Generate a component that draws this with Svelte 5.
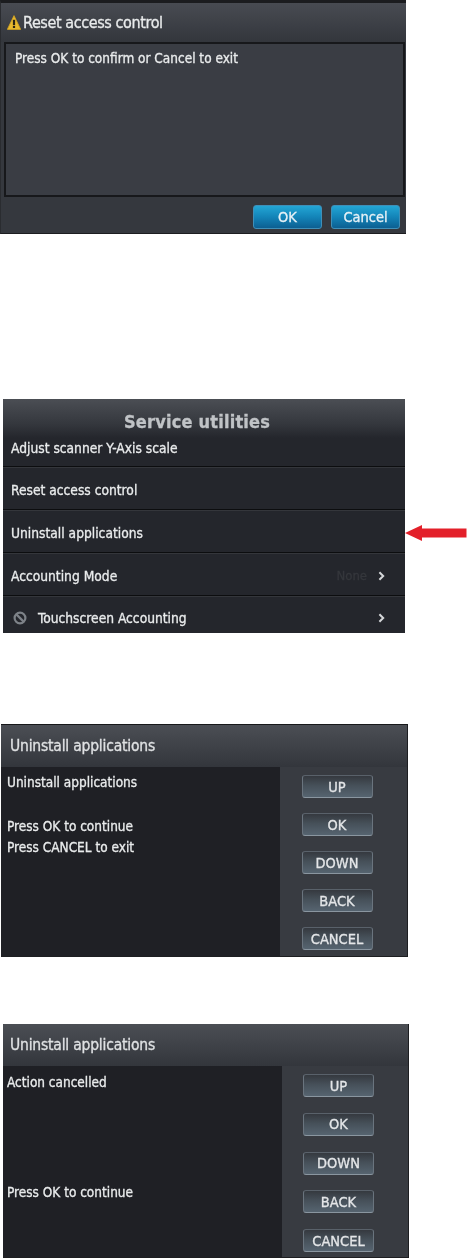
<script>
  const rows = [
    { label: 'Adjust scanner Y-Axis scale', cls: 'first' },
    { label: 'Reset access control' },
    { label: 'Uninstall applications' },
    { label: 'Accounting Mode', value: 'None', chevron: true },
    { label: 'Touchscreen Accounting', chevron: true, blocked: true, cls: 'last' }
  ];
  const keys = ['UP', 'OK', 'DOWN', 'BACK', 'CANCEL'];
</script>

<div class="page">
  <section class="panel dialog">
    <header class="dlg-head">
      <svg class="warn" width="14" height="15" viewBox="0 0 14 15" aria-hidden="true">
        <path d="M7 .6 13.700 14.400H.3Z" fill="#e8b92e" stroke="#d3a31f" stroke-width=".8" stroke-linejoin="round" />
        <rect x="5.900" y="4.800" width="2.200" height="5.400" fill="#2a2414" />
        <rect x="5.900" y="11" width="2.200" height="2" fill="#2a2414" />
      </svg>
      <span>Reset access control</span>
    </header>
    <div class="dlg-body">Press OK to confirm or Cancel to exit</div>
    <footer class="dlg-foot">
      <button class="blue">OK</button>
      <button class="blue">Cancel</button>
    </footer>
  </section>

  <section class="menu-wrap">
    <div class="panel menu">
      <header class="menu-head">Service utilities</header>
      {#each rows as row}
        <div class="row {row.cls ?? ''}">
          {#if row.blocked}
            <svg class="blocked" width="14" height="14" viewBox="0 0 14 14" aria-hidden="true">
              <circle cx="7" cy="7" r="5.400" fill="none" stroke="#7d8288" stroke-width="2.200" />
              <path d="M3.400 3.400 10.600 10.600" stroke="#7d8288" stroke-width="2.200" />
            </svg>
          {/if}
          <span class="label">{row.label}</span>
          {#if row.value}<span class="value">{row.value}</span>{/if}
          {#if row.chevron}
            <svg class="chev" width="7" height="10" viewBox="0 0 7 10" aria-hidden="true">
              <path d="M1.400 1.200 5.200 5 1.400 8.800" fill="none" stroke="#d4d6d8" stroke-width="2" />
            </svg>
          {/if}
        </div>
      {/each}
    </div>
    <svg class="arrow" width="62" height="16" viewBox="0 0 62 16" aria-hidden="true">
      <path d="M0 8 17 0V3.500H61.500V12.500H17V16Z" fill="#e3202a" />
    </svg>
  </section>

  <section class="panel keypad one">
    <header class="key-head">Uninstall applications</header>
    <div class="key-main">
      <div class="key-text">
        <p class="gap1">Uninstall applications</p>
        <p>Press OK to continue</p>
        <p>Press CANCEL to exit</p>
      </div>
      <div class="key-col">
        {#each keys as k}<button class="gray">{k}</button>{/each}
      </div>
    </div>
  </section>

  <section class="panel keypad two">
    <header class="key-head">Uninstall applications</header>
    <div class="key-main">
      <div class="key-text">
        <p class="gap3">Action cancelled</p>
        <p>Press OK to continue</p>
      </div>
      <div class="key-col">
        {#each keys as k}<button class="gray">{k}</button>{/each}
      </div>
    </div>
  </section>
</div>

<style>
  :global(body) {
    margin: 0;
    background: #fff;
  }
  .page {
    width: 471px;
    height: 1258px;
    overflow: hidden;
    font-family: "DejaVu Sans", "Noto Sans", sans-serif;
    font-stretch: condensed;
    color: #e9ebec;
    -webkit-text-stroke: .3px currentColor;
  }
  .panel {
    box-sizing: border-box;
    display: flex;
    flex-direction: column;
    filter: blur(0.35px);
  }
  button {
    font-family: inherit;
    font-stretch: inherit;
    padding: 0;
    cursor: pointer;
  }

  /* Dialog */
  .dialog {
    width: 406px;
    height: 234px;
    background: #35383e;
    border-top: 3px solid #1b1c1f;
    border-left: 1px solid #2a2c30;
    border-bottom: 1px solid #1c1d20;
  }
  .dlg-head {
    height: 39px;
    flex: none;
    box-sizing: border-box;
    display: flex;
    align-items: center;
    gap: 2px;
    padding: 0 0 1px 6px;
    font-size: 16px;
    letter-spacing: -.4px;
    background: linear-gradient(#484b52, #33363c);
  }
  .warn {
    flex: none;
  }
  .dlg-body {
    flex: none;
    box-sizing: border-box;
    height: 155px;
    margin-left: 3px;
    margin-right: 1px;
    padding: 2px 0 0 9px;
    background: #3a3d44;
    border: 2px solid #17181b;
    font-size: 13.500px;
    line-height: 24px;
  }
  .dlg-foot {
    flex: 1;
    display: flex;
    justify-content: flex-end;
    gap: 9px;
    padding: 8px 6px 0 0;
  }
  .blue {
    width: 69px;
    height: 24px;
    border: 1px solid #3f8fb8;
    border-radius: 3px;
    color: #e6f1f6;
    font-size: 14.500px;
    background: linear-gradient(#23a6d5, #1384b8 50%, #0c5f92);
  }

  /* Menu */
  .menu-wrap {
    display: flex;
    align-items: flex-start;
    margin: 165px 0 0 3px;
  }
  .menu {
    width: 402px;
    height: 234px;
    flex: none;
    background: #24262c;
  }
  .menu-head {
    flex: none;
    height: 39px;
    box-sizing: border-box;
    padding: 8px 14px 0 0;
    text-align: center;
    font-weight: 700;
    font-size: 18px;
    letter-spacing: .2px;
    line-height: 30px;
    color: #c0c3c6;
    background: linear-gradient(#4b4e54, #34373d 65%, #24262c);
  }
  .row {
    flex: none;
    box-sizing: border-box;
    height: 43px;
    display: flex;
    align-items: center;
    padding: 3px 20px 0 8px;
    font-size: 13.700px;
    border-bottom: 1px solid #0c0d0f;
    box-shadow: inset 0 1px 0 #34363b;
  }
  .row.first {
    height: 29px;
    padding: 0 20px 9px 8px;
    box-shadow: none;
  }
  .row.last {
    height: 37px;
    padding-top: 6px;
    padding-left: 10px;
    border-bottom: 0;
  }
  .label {
    flex: 1;
  }
  .blocked {
    flex: none;
    margin-right: 11px;
  }
  .value {
    margin-right: 11px;
    color: #35373c;
    font-size: 13px;
  }
  .chev {
    display: block;
    flex: none;
  }
  .arrow {
    flex: none;
    margin-top: 126px;
    filter: blur(0.35px);
  }

  /* Keypad screens */
  .keypad {
    height: 233px;
    width: 407px;
    background: #383b41;
    border-right: 1px solid #1d1e21;
    border-bottom: 1px solid #1d1e21;
  }
  .keypad.one {
    margin: 91px 0 0 1px;
    border-top: 1px solid #17181a;
  }
  .keypad.two {
    margin: 67px 0 0 3px;
    height: 234px;
    width: 406px;
  }
  .key-head {
    flex: none;
    box-sizing: border-box;
    height: 42px;
    display: flex;
    align-items: center;
    padding-left: 9px;
    font-size: 15.500px;
    letter-spacing: -.2px;
    color: #dfe1e3;
    background: linear-gradient(#4b4e54, #33363c);
  }
  .keypad.two .key-head {
    padding-left: 7px;
  }
  .key-main {
    flex: 1;
    display: flex;
    min-height: 0;
  }
  .key-text {
    width: 279px;
    flex: none;
    box-sizing: border-box;
    padding: 5px 0 0 6px;
    background: #1f2025;
    font-size: 13.500px;
    line-height: 21px;
  }
  .keypad.two .key-text {
    padding: 6px 0 0 4px;
  }
  .key-text p {
    margin: 0;
  }
  .key-text .gap1 { margin-bottom: 23px; }
  .key-text .gap3 { margin-bottom: 89px; }
  .key-col {
    flex: 1;
    display: flex;
    flex-direction: column;
    align-items: center;
    gap: 15px;
    padding: 8px 34px 0 21px;
  }
  .keypad.two .key-col {
    gap: 15.750px;
    padding-top: 8px;
  }
  .gray {
    flex: none;
    width: 71px;
    height: 23px;
    border: 1px solid;
    border-color: #59616a #6a747e #8a96a0;
    border-radius: 3px;
    color: #e4e6e8;
    font-size: 14.500px;
    background: linear-gradient(#35393f, #465059 45%, #566470);
  }
</style>
